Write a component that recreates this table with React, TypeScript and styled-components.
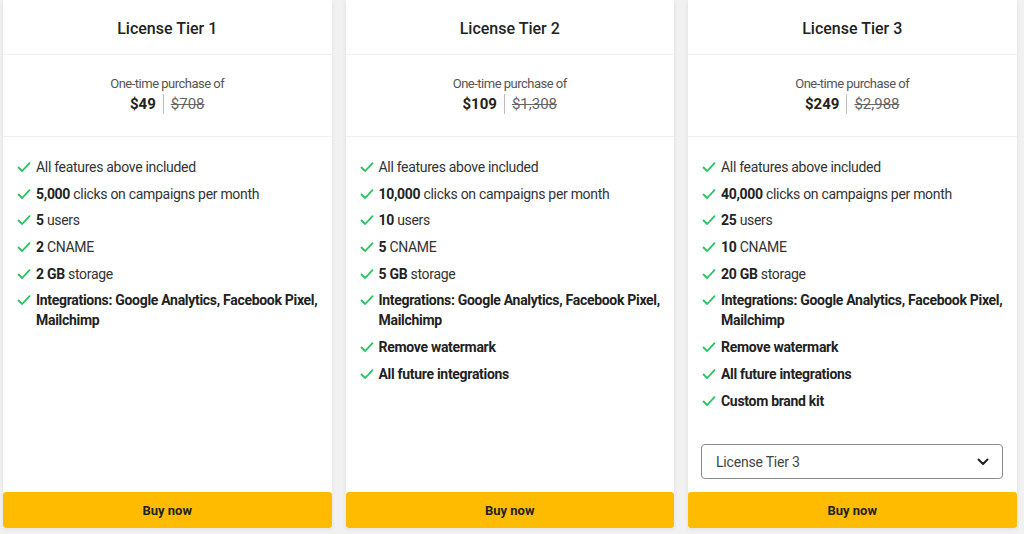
import React from "react";
import styled, { createGlobalStyle } from "styled-components";

const Global = createGlobalStyle`
  html, body { margin: 0; padding: 0; background: #f1f1f1; }
  body { font-family: Roboto, "Liberation Sans", Arial, sans-serif; color: #222; }
  * { box-sizing: border-box; }
`;

const Page = styled.div`
  display: grid;
  grid-template-columns: repeat(3, 328.5px);
  column-gap: 14px;
  padding: 0 0 0 3px;
  height: 534px;
`;

const Card = styled.div`
  display: flex;
  flex-direction: column;
  background: #fff;
  height: 528px;
  box-shadow: 0 1px 4px rgba(0, 0, 0, 0.08);
`;

const Header = styled.div`
  height: 55px;
  display: flex;
  align-items: center;
  justify-content: center;
  border-bottom: 1px solid #f0f0f0;
  font-size: 16px;
  font-weight: 500;
  color: #222;
  padding-top: 2px;
`;

const PriceBox = styled.div`
  height: 82px;
  display: flex;
  flex-direction: column;
  align-items: center;
  justify-content: center;
  border-bottom: 1px solid #f0f0f0;
  padding-bottom: 3px;
`;

const PriceLabel = styled.div`
  font-size: 13px;
  color: #555;
  letter-spacing: -0.5px;
  line-height: 17px;
`;

const PriceRow = styled.div`
  display: flex;
  align-items: center;
  line-height: 20px;
  margin-top: 2px;
`;

const Price = styled.span`
  font-size: 15px;
  font-weight: 700;
  color: #222;
`;

const Divider = styled.span`
  width: 1px;
  height: 20px;
  background: #bbb;
  margin: 0 7px;
`;

const OldPrice = styled.span`
  font-size: 15px;
  color: #666;
  text-decoration: line-through;
`;

const Features = styled.ul`
  list-style: none;
  margin: 0;
  padding: 20px 10px 0 14px;
  display: flex;
  flex-direction: column;
  gap: 6.7px;
`;

const Feature = styled.li`
  display: flex;
  align-items: flex-start;
  gap: 5px;
  font-size: 14px;
  line-height: 20px;
  letter-spacing: -0.3px;
  color: #333;
`;

const Check = styled.svg`
  flex: none;
  width: 14px;
  height: 14px;
  margin-top: 3px;
`;

const FeatureText = styled.span<{ $bold?: boolean }>`
  font-weight: ${(p) => (p.$bold ? 700 : 400)};
  color: ${(p) => (p.$bold ? "#222" : "#333")};
  b { font-weight: 700; color: #222; }
`;

const Spacer = styled.div`
  flex: 1;
`;

const SelectBox = styled.div`
  margin: 0 14px 13px 13px;
  height: 35px;
  border: 1px solid #8a8a8a;
  border-radius: 4px;
  display: flex;
  align-items: center;
  justify-content: space-between;
  padding: 0 13px 0 14px;
  font-size: 14px;
  letter-spacing: -0.2px;
  color: #444;
`;

const BuyButton = styled.button`
  height: 36px;
  border: none;
  border-radius: 3px;
  background: #ffbb00;
  color: #222;
  font-family: Roboto, "Liberation Sans", Arial, sans-serif;
  font-size: 13px;
  font-weight: 700;
  cursor: pointer;
`;

const CheckIcon = () => (
  <Check viewBox="0 0 14 14">
    <path d="M1.5 7.5 L5.2 11 L12.5 3.2" fill="none" stroke="#22c55e" strokeWidth="1.8" strokeLinecap="round" strokeLinejoin="round" />
  </Check>
);

type Tier = {
  name: string;
  price: string;
  old: string;
  clicks: string;
  users: string;
  cname: string;
  storage: string;
  extras: string[];
  select?: boolean;
};

const tiers: Tier[] = [
  { name: "License Tier 1", price: "$49", old: "$708", clicks: "5,000", users: "5", cname: "2", storage: "2 GB", extras: [] },
  {
    name: "License Tier 2", price: "$109", old: "$1,308", clicks: "10,000", users: "10", cname: "5", storage: "5 GB",
    extras: ["Remove watermark", "All future integrations"],
  },
  {
    name: "License Tier 3", price: "$249", old: "$2,988", clicks: "40,000", users: "25", cname: "10", storage: "20 GB",
    extras: ["Remove watermark", "All future integrations", "Custom brand kit"], select: true,
  },
];

export default function App() {
  return (
    <>
      <Global />
      <Page>
        {tiers.map((t) => (
          <Card key={t.name}>
            <Header>{t.name}</Header>
            <PriceBox>
              <PriceLabel>One-time purchase of</PriceLabel>
              <PriceRow>
                <Price>{t.price}</Price>
                <Divider />
                <OldPrice>{t.old}</OldPrice>
              </PriceRow>
            </PriceBox>
            <Features>
              <Feature><CheckIcon /><FeatureText>All features above included</FeatureText></Feature>
              <Feature><CheckIcon /><FeatureText><b>{t.clicks}</b> clicks on campaigns per month</FeatureText></Feature>
              <Feature><CheckIcon /><FeatureText><b>{t.users}</b> users</FeatureText></Feature>
              <Feature><CheckIcon /><FeatureText><b>{t.cname}</b> CNAME</FeatureText></Feature>
              <Feature><CheckIcon /><FeatureText><b>{t.storage}</b> storage</FeatureText></Feature>
              <Feature><CheckIcon /><FeatureText $bold>Integrations: Google Analytics, Facebook Pixel, Mailchimp</FeatureText></Feature>
              {t.extras.map((e) => (
                <Feature key={e}><CheckIcon /><FeatureText $bold>{e}</FeatureText></Feature>
              ))}
            </Features>
            <Spacer />
            {t.select && (
              <SelectBox>
                <span>{t.name}</span>
                <svg width="12" height="8" viewBox="0 0 12 8">
                  <path d="M1.5 1.5 L6 6 L10.5 1.5" fill="none" stroke="#222" strokeWidth="2" strokeLinecap="round" strokeLinejoin="round" />
                </svg>
              </SelectBox>
            )}
            <BuyButton>Buy now</BuyButton>
          </Card>
        ))}
      </Page>
    </>
  );
}
